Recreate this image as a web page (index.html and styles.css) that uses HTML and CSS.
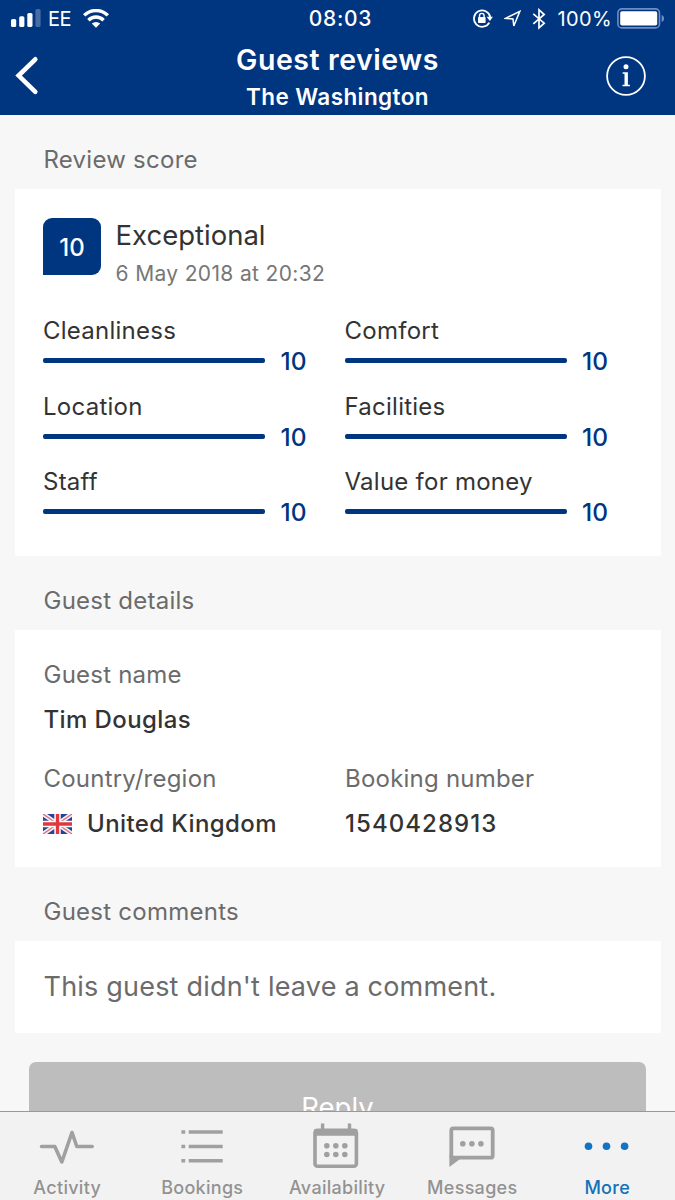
FILE: index.html
```html
<!DOCTYPE html>
<html lang="en">
<head>
<meta charset="utf-8">
<title>Guest reviews</title>
<link rel="stylesheet" href="styles.css">
</head>
<body>
<div class="screen">
  <header class="header">
    <div class="status">
      <div class="status-left">
        <svg width="31" height="19" viewBox="0 0 31 19" fill="#fff"><rect x="0" y="10" width="5.2" height="8" rx="1.6"/><rect x="8.2" y="7.2" width="5.2" height="10.8" rx="1.6"/><rect x="16.3" y="4" width="5.2" height="14" rx="1.6"/><rect x="24.4" y="0" width="5.2" height="18" rx="1.6" opacity=".28"/></svg>
        <span class="carrier">EE</span>
        <svg class="wifi" width="26" height="19" viewBox="0 0 26 19"><g fill="none" stroke="#fff" stroke-width="3.4"><path d="M1.2 6.4a16.8 16.8 0 0 1 23.6 0"/><path d="M5.4 11.2a10.8 10.8 0 0 1 15.2 0"/></g><path d="M8.8 14.6a6 6 0 0 1 8.4 0L13 18.8z" fill="#fff"/></svg>
      </div>
      <span class="clock">08:03</span>
      <div class="status-right">
        <svg width="22" height="19" viewBox="0 0 22 19"><path d="M17.3 13.6a8.2 8.2 0 1 1 .9-5.6" fill="none" stroke="#fff" stroke-width="1.8"/><path d="M14.6 7.8h6.3l-3 4.2z" fill="#fff"/><rect x="6" y="8" width="7.6" height="6" rx=".8" fill="#fff"/><path d="M7.5 8.5V6.7a2.3 2.3 0 0 1 4.6 0v1.8" fill="none" stroke="#fff" stroke-width="1.4"/></svg>
        <svg class="locate" width="17" height="18" viewBox="0 0 17 18"><path d="M1.5 8.4 15.8 1.4 9.8 16 9 9z" fill="none" stroke="#fff" stroke-width="1.5"/></svg>
        <svg class="bluetooth" width="14" height="22" viewBox="0 0 14 22"><path d="M1.3 5.8 12.2 15.2 7 19.8V1.8l5.2 4.7L1.3 15.9" fill="none" stroke="#fff" stroke-width="1.7"/></svg>
        <span class="percent">100%</span>
        <svg width="48" height="21" viewBox="0 0 48 21"><rect x=".9" y=".9" width="41.6" height="19" rx="4" fill="none" stroke="#6e8dc2" stroke-width="1.6"/><rect x="3.2" y="3.2" width="37" height="14.4" rx="1.8" fill="#fff"/><path d="M44.6 7c3.4 1 3.4 6 0 7z" fill="#6e8dc2"/></svg>
      </div>
    </div>
    <div class="nav">
      <svg class="back" width="24" height="40" viewBox="0 0 24 40"><path d="M20.3 3.3 3.6 19.6l16.7 16.3" fill="none" stroke="#fff" stroke-width="4.6" stroke-linecap="round"/></svg>
      <div class="titles">
        <h1 class="title">Guest reviews</h1>
        <div class="subtitle">The Washington</div>
      </div>
      <svg class="info" width="42" height="42" viewBox="0 0 42 42"><circle cx="21" cy="21" r="18.9" fill="none" stroke="#fff" stroke-width="1.8"/><circle cx="21" cy="11.8" r="2.5" fill="#fff"/><path d="M17.6 17.2h5.3v12.6h2v1.5h-7.4v-1.5h2v-11h-1.9z" fill="#fff"/></svg>
    </div>
  </header>
  <main class="content">
    <h2 class="section-title">Review score</h2>
    <section class="card score-card">
      <div class="overall">
        <div class="badge">10</div>
        <div class="verdict">
          <div class="verdict-title">Exceptional</div>
          <div class="date">6 May 2018 at 20:32</div>
        </div>
      </div>
      <div class="scores">
        <div class="score"><span class="score-name">Cleanliness</span><div class="score-line"><i class="bar"></i><b class="value">10</b></div></div>
        <div class="score"><span class="score-name">Comfort</span><div class="score-line"><i class="bar"></i><b class="value">10</b></div></div>
        <div class="score"><span class="score-name">Location</span><div class="score-line"><i class="bar"></i><b class="value">10</b></div></div>
        <div class="score"><span class="score-name">Facilities</span><div class="score-line"><i class="bar"></i><b class="value">10</b></div></div>
        <div class="score"><span class="score-name">Staff</span><div class="score-line"><i class="bar"></i><b class="value">10</b></div></div>
        <div class="score"><span class="score-name">Value for money</span><div class="score-line"><i class="bar"></i><b class="value">10</b></div></div>
      </div>
    </section>
    <h2 class="section-title">Guest details</h2>
    <section class="card details-card">
      <div class="field"><div class="field-label">Guest name</div><div class="field-value">Tim Douglas</div></div>
      <div class="field-row">
        <div class="field"><div class="field-label">Country/region</div>
          <div class="field-value country">
            <svg class="flag" width="29" height="20" viewBox="0 0 29 20"><rect width="29" height="20" fill="#2b3f94"/><path d="M0 0l29 20M29 0L0 20" stroke="#f3eef6" stroke-width="4.6"/><path d="M0 0l29 20M29 0L0 20" stroke="#d9707c" stroke-width="1.3"/><path d="M14.5 0v20M0 10h29" stroke="#fff" stroke-width="6.4"/><path d="M14.5 0v20M0 10h29" stroke="#e0363c" stroke-width="3.4"/></svg>
            <span>United Kingdom</span>
          </div>
        </div>
        <div class="field"><div class="field-label">Booking number</div><div class="field-value number">1540428913</div></div>
      </div>
    </section>
    <h2 class="section-title">Guest comments</h2>
    <section class="card comment-card">This guest didn't leave a comment.</section>
    <button class="reply">Reply</button>
  </main>
  <nav class="tabs">
    <a class="tab"><svg width="56" height="48" viewBox="0 0 56 48"><path d="M2.5 24.5h13.3L22.8 40 33 10.5l4.8 14h15.4" fill="none" stroke="#a0a0a0" stroke-width="3.6" stroke-linecap="round" stroke-linejoin="round"/></svg><span class="tab-label">Activity</span></a>
    <a class="tab"><svg width="56" height="48" viewBox="0 0 56 48"><path d="M7.4 10h3.8M14.7 10h34M7.4 24.4h3.8M14.7 24.4h34M7.4 38.8h3.8M14.7 38.8h34" stroke="#a0a0a0" stroke-width="3.5"/></svg><span class="tab-label">Bookings</span></a>
    <a class="tab"><svg width="56" height="48" viewBox="0 0 56 48"><g transform="translate(-1.2 0)"><rect x="7.2" y="8.2" width="41.4" height="36" rx="2.5" fill="none" stroke="#a0a0a0" stroke-width="3.6"/><path d="M6.5 7h43v6.8h-43zM13.1 1.4h3.4v7h-3.4zM40 1.4h3.4v7H40z" fill="#a0a0a0"/><g fill="#a0a0a0"><circle cx="19" cy="23.7" r="2.8"/><circle cx="28" cy="23.7" r="2.8"/><circle cx="37" cy="23.7" r="2.8"/><circle cx="19" cy="32.5" r="2.8"/><circle cx="28" cy="32.5" r="2.8"/><circle cx="37" cy="32.5" r="2.8"/></g></g></svg><span class="tab-label">Availability</span></a>
    <a class="tab"><svg width="56" height="48" viewBox="0 0 56 48"><rect x="7.3" y="6.4" width="41.4" height="29.3" rx="2" fill="none" stroke="#a0a0a0" stroke-width="3.8"/><path d="M5.4 33v12l11.3-8.5z" fill="#a0a0a0"/><g fill="#a0a0a0"><circle cx="18.8" cy="21.8" r="2.8"/><circle cx="27.9" cy="21.8" r="2.8"/><circle cx="36.9" cy="21.8" r="2.8"/></g></svg><span class="tab-label">Messages</span></a>
    <a class="tab tab-active"><svg width="56" height="48" viewBox="0 0 56 48" fill="#1273c4"><circle cx="9.5" cy="24.2" r="3.8"/><circle cx="27.5" cy="24.2" r="3.8"/><circle cx="45.6" cy="24.2" r="3.8"/></svg><span class="tab-label">More</span></a>
  </nav>
</div>
</body>
</html>
```
FILE: styles.css
```css
* { box-sizing: border-box; }
body { margin: 0; font-family: Inter, "Liberation Sans", sans-serif; font-size: 24px; color: #333; background: #f7f7f7; }
svg { display: block; flex: none; }
h1, h2 { margin: 0; font-weight: 400; }
.screen { height: 1200px; display: flex; flex-direction: column; overflow: hidden; }
.header { height: 115px; flex: none; background: #003580; color: #fff; }
.status { height: 37px; display: grid; grid-template-columns: 1fr auto 1fr; align-items: center; padding: 0 10px 0 11px; font-size: 20px; }
.status-left, .status-right { display: flex; align-items: center; }
.status-right { justify-content: flex-end; }
.carrier { margin-left: 6px; letter-spacing: -.4px; }
.wifi { margin-left: 12px; }
.clock { padding-left: 5px; font-size: 21px; font-weight: 500; letter-spacing: .7px; }
.locate { margin-left: 10px; }
.bluetooth { margin: 0 11px; }
.percent { margin-right: 5px; letter-spacing: .4px; }
.nav { height: 78px; display: grid; grid-template-columns: 60px 1fr 60px; padding: 0 12px; }
.back { margin: 19px 0 0 3px; }
.info { margin: 18px 0 0 2px; }
.titles { text-align: center; padding-top: 5px; }
.title { font-size: 28.5px; line-height: 36px; font-weight: 600; letter-spacing: .55px; }
.subtitle { font-size: 22.5px; line-height: 37px; font-weight: 600; letter-spacing: .4px; }
.content { flex: 1; min-height: 0; overflow: hidden; }
.section-title { height: 74px; padding: 15px 43.5px 0; font-size: 24px; line-height: 60px; letter-spacing: .25px; color: #6b6b6b; }
.card { background: #fff; margin: 0 14px 0 15px; padding: 0 28px; }
.score-card { height: 367px; padding-top: 29px; }
.overall { display: flex; height: 97px; }
.badge { width: 58px; height: 57px; border-radius: 9px 9px 9px 0; background: #003580; color: #fff; font-size: 24px; font-weight: 500; line-height: 59px; text-align: center; }
.verdict { margin-left: 14.5px; }
.verdict-title { font-size: 27.5px; line-height: 35px; }
.date { font-size: 21px; line-height: 42px; letter-spacing: .35px; color: #777; }
.scores { display: grid; grid-template-columns: 301.5px 265px; grid-auto-rows: 75.5px; }
.score-name { display: block; height: 30px; line-height: 31px; letter-spacing: .25px; }
.score-line { display: flex; align-items: center; height: 31px; gap: 15.5px; }
.bar { width: 222px; height: 5px; border-radius: 2px; background: #003580; }
.value { height: 31px; font-size: 24.5px; line-height: 32px; font-weight: 500; color: #003580; }
.details-card { height: 237px; padding: 22px 28px 0 28.5px; }
.field { height: 104px; }
.field-row { display: grid; grid-template-columns: 301.5px 1fr; }
.field-label { line-height: 45px; letter-spacing: .22px; color: #6b6b6b; }
.field-value { line-height: 45px; font-weight: 500; letter-spacing: .4px; }
.number { letter-spacing: 1.05px; }
.country { display: flex; align-items: center; gap: 15px; margin-left: -.5px; }
.comment-card { height: 92px; padding-left: 28.5px; font-size: 27px; line-height: 92px; letter-spacing: .2px; color: #6b6b6b; }
.reply { display: block; width: 617px; height: 90px; margin: 29px 0 0 29px; border: 0; border-radius: 7px; background: #bdbdbd; color: #fff; font: 400 27.5px/91px Inter, sans-serif; padding: 0; }
.tabs { height: 89px; flex: none; display: grid; grid-template-columns: repeat(5, 135px); margin-left: -1px; background: #f2f2f2; border-top: 1px solid #999; }
.tab { display: flex; flex-direction: column; align-items: center; padding-top: 10px; font-size: 18px; line-height: 36px; font-weight: 500; letter-spacing: .3px; color: #929292; }
.tab-label { padding-left: 1.5px; }
.tab-active { color: #1273b8; }
```
